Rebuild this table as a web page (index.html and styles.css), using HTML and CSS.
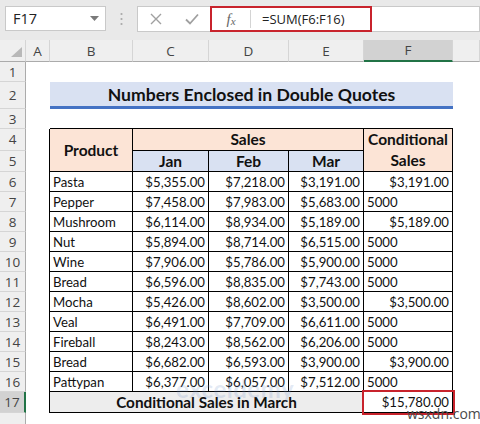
FILE: index.html
```html
<!DOCTYPE html>
<html>
<head>
<meta charset="utf-8">
<link rel="stylesheet" href="styles.css">
</head>
<body>
<div class="fbar">
  <div class="namebox"><span>F17</span><svg width="9" height="5" viewBox="0 0 9 5"><path d="M0 0H9L4.5 5Z" fill="#7a7a7a"/></svg></div>
  <div class="dots"><svg width="3" height="14" viewBox="0 0 3 14"><circle cx="1.5" cy="2" r="1.1" fill="#a8a8a8"/><circle cx="1.5" cy="7" r="1.1" fill="#a8a8a8"/><circle cx="1.5" cy="12" r="1.1" fill="#a8a8a8"/></svg></div>
  <div class="btns">
    <span class="btn"><svg width="12" height="12" viewBox="0 0 12 12"><path d="M1 1L11 11M11 1L1 11" stroke="#a0a0a0" stroke-width="1.4" fill="none"/></svg></span>
    <span class="btn"><svg width="14" height="12" viewBox="0 0 14 12"><path d="M1 6.5L5 10.5L13 1.5" stroke="#a0a0a0" stroke-width="1.8" fill="none"/></svg></span>
  </div>
  <div class="formula">
    <div class="hl">
      <span class="fx">f<sub>x</sub></span>
      <span class="sep"></span>
      <span class="ftext">=SUM(F6:F16)</span>
    </div>
  </div>
</div>
<table class="sheet">
  <colgroup>
    <col class="w-rn"><col class="w-a"><col class="w-b"><col class="w-c"><col class="w-d"><col class="w-e"><col class="w-f"><col class="w-g">
  </colgroup>
  <tr class="h-hdr">
    <th class="corner"><svg width="26" height="21" viewBox="0 0 26 21"><path d="M22 7V17H11Z" fill="#b8b8b8"/></svg></th>
    <th class="ch">A</th><th class="ch">B</th><th class="ch">C</th><th class="ch">D</th><th class="ch">E</th><th class="ch sel">F</th><th class="ch"></th>
  </tr>
  <tr class="h20"><th class="rn">1</th><td></td><td></td><td></td><td></td><td></td><td></td><td></td></tr>
  <tr class="h27"><th class="rn">2</th><td></td><td class="title" colspan="5">Numbers Enclosed in Double Quotes</td><td></td></tr>
  <tr class="h20"><th class="rn">3</th><td></td><td class="tb"></td><td class="tb"></td><td class="tb"></td><td class="tb"></td><td class="tb"></td><td></td></tr>
  <tr class="h21"><th class="rn">4</th><td class="lb"></td><td class="c hd peach" rowspan="2">Product</td><td class="c hd peach" colspan="3">Sales</td><td class="c hd peach two" rowspan="2">Conditional<br>Sales</td><td></td></tr>
  <tr class="h21"><th class="rn">5</th><td class="lb"></td><td class="c hd blue">Jan</td><td class="c hd blue">Feb</td><td class="c hd blue">Mar</td><td></td></tr>
  <tr class="h20"><th class="rn">6</th><td class="lb"></td><td class="c p">Pasta</td><td class="c n">$5,355.00</td><td class="c n">$7,218.00</td><td class="c n">$3,191.00</td><td class="c n">$3,191.00</td><td></td></tr>
  <tr class="h20"><th class="rn">7</th><td class="lb"></td><td class="c p">Pepper</td><td class="c n">$7,458.00</td><td class="c n">$7,983.00</td><td class="c n">$5,683.00</td><td class="c p">5000</td><td></td></tr>
  <tr class="h20"><th class="rn">8</th><td class="lb"></td><td class="c p">Mushroom</td><td class="c n">$6,114.00</td><td class="c n">$8,934.00</td><td class="c n">$5,189.00</td><td class="c n">$5,189.00</td><td></td></tr>
  <tr class="h20"><th class="rn">9</th><td class="lb"></td><td class="c p">Nut</td><td class="c n">$5,894.00</td><td class="c n">$8,714.00</td><td class="c n">$6,515.00</td><td class="c p">5000</td><td></td></tr>
  <tr class="h20"><th class="rn">10</th><td class="lb"></td><td class="c p">Wine</td><td class="c n">$7,906.00</td><td class="c n">$5,786.00</td><td class="c n">$5,900.00</td><td class="c p">5000</td><td></td></tr>
  <tr class="h20"><th class="rn">11</th><td class="lb"></td><td class="c p">Bread</td><td class="c n">$6,596.00</td><td class="c n">$8,835.00</td><td class="c n">$7,743.00</td><td class="c p">5000</td><td></td></tr>
  <tr class="h20"><th class="rn">12</th><td class="lb"></td><td class="c p">Mocha</td><td class="c n">$5,426.00</td><td class="c n">$8,602.00</td><td class="c n">$3,500.00</td><td class="c n">$3,500.00</td><td></td></tr>
  <tr class="h20"><th class="rn">13</th><td class="lb"></td><td class="c p">Veal</td><td class="c n">$6,491.00</td><td class="c n">$7,709.00</td><td class="c n">$6,611.00</td><td class="c p">5000</td><td></td></tr>
  <tr class="h20"><th class="rn">14</th><td class="lb"></td><td class="c p">Fireball</td><td class="c n">$8,243.00</td><td class="c n">$8,562.00</td><td class="c n">$6,206.00</td><td class="c p">5000</td><td></td></tr>
  <tr class="h20"><th class="rn">15</th><td class="lb"></td><td class="c p">Bread</td><td class="c n">$6,682.00</td><td class="c n">$6,593.00</td><td class="c n">$3,900.00</td><td class="c n">$3,900.00</td><td></td></tr>
  <tr class="h20"><th class="rn">16</th><td class="lb"></td><td class="c p">Pattypan</td><td class="c n">$6,377.00</td><td class="c n">$6,057.00</td><td class="c n">$7,512.00</td><td class="c p">5000</td><td></td></tr>
  <tr class="h21"><th class="rn rsel">17</th><td class="lb"></td><td class="c total" colspan="4">Conditional Sales in March</td><td class="c n sum">$15,780.00</td><td></td></tr>
  <tr class="h20"><th class="rn"></th><td></td><td></td><td></td><td></td><td></td><td></td><td></td></tr>
</table>
<div class="wm">exceldemy</div>
<div class="credit">wsxdn.com</div>
</body>
</html>
```
FILE: styles.css
```css
html, body {
  margin: 0;
  padding: 0;
}
body {
  width: 480px;
  height: 424px;
  overflow: hidden;
  background: #fff;
  font-family: Lato, "Liberation Sans", sans-serif;
  position: relative;
}
.fbar {
  display: flex;
  align-items: flex-start;
  height: 40px;
  box-sizing: border-box;
  padding-top: 6px;
  background: #e9e9e9;
}
.namebox {
  margin-left: 5px;
  width: 101px;
  height: 25px;
  box-sizing: border-box;
  background: #fff;
  border: 1px solid #c9c9c9;
  display: flex;
  align-items: center;
  justify-content: space-between;
  padding: 0 6px 0 7px;
  font: 14.5px "Open Sans", sans-serif;
  color: #222;
}
.dots {
  width: 31px;
  height: 25px;
  display: flex;
  align-items: center;
  justify-content: center;
}
.btns {
  width: 73px;
  height: 26px;
  box-sizing: border-box;
  background: #fff;
  border: 1px solid #c9c9c9;
  border-right: none;
  display: flex;
  align-items: center;
}
.btn {
  width: 36px;
  display: flex;
  justify-content: center;
}
.formula {
  flex: 1;
  height: 26px;
  box-sizing: border-box;
  background: #fff;
  border: 1px solid #c9c9c9;
  border-left: none;
}
.hl {
  width: 162px;
  height: 26px;
  margin-top: -1px;
  box-sizing: border-box;
  border: 2px solid #c8232c;
  display: flex;
  align-items: center;
}
.fx {
  width: 38px;
  text-align: center;
  font: italic 15px "Liberation Serif", serif;
  color: #666;
}
.fx sub {
  font-size: 11px;
  vertical-align: -1px;
}
.sep {
  width: 1px;
  height: 18px;
  background: #d4d4d4;
}
.ftext {
  padding-left: 11px;
  font: 13px "Open Sans", sans-serif;
  color: #222;
}
.sheet {
  border-collapse: separate;
  border-spacing: 0;
  table-layout: fixed;
  width: 480px;
}
.w-rn { width: 26px; }
.w-a { width: 24px; }
.w-b { width: 83px; }
.w-c { width: 76px; }
.w-d { width: 80px; }
.w-e { width: 75px; }
.w-f { width: 89px; }
.w-g { width: 27px; }
.sheet th, .sheet td {
  padding: 0;
  box-sizing: border-box;
  white-space: nowrap;
  overflow: hidden;
}
.h-hdr { height: 22px; }
.h20 { height: 20px; }
.h21 { height: 21px; }
.h27 { height: 27px; }
.corner {
  background: #efefef;
  border-right: 1px solid #d5d5d5;
  border-bottom: 1px solid #ababab;
  vertical-align: top;
  line-height: 0;
}
.ch {
  background: #efefef;
  border-right: 1px solid #d5d5d5;
  border-bottom: 1px solid #ababab;
  font: 13.5px "Open Sans", sans-serif;
  color: #444;
  font-weight: normal;
  text-align: center;
}
.ch.sel {
  background: #d2d2d2;
  border-bottom: 2px solid #217346;
}
.rn {
  background: #efefef;
  border-right: 1px solid #ababab;
  border-bottom: 1px solid #d5d5d5;
  font: 13.5px "Open Sans", sans-serif;
  color: #444;
  font-weight: normal;
  text-align: center;
}
.rn.rsel {
  background: #d2d2d2;
  border-right: 2px solid #217346;
}
.title {
  background: #d9e1f2;
  border-bottom: 3px solid #4472c4;
  font-weight: bold;
  font-size: 17.6px;
  color: #111;
  text-align: center;
  vertical-align: middle;
}
.tb { border-bottom: 1px solid #000; }
.lb { border-right: 1px solid #000; }
.c {
  border-right: 1px solid #000;
  border-bottom: 1px solid #000;
  font-size: 13.2px;
  color: #111;
}
.hd {
  font-weight: bold;
  font-size: 15.5px;
  text-align: center;
  vertical-align: middle;
}
.two { line-height: 21px; }
.peach { background: #fce4d6; }
.blue { background: #d9e1f2; }
.p {
  text-align: left;
  padding-left: 3px !important;
}
.n {
  text-align: right;
  padding-right: 3px !important;
}
.total {
  background: #ededed;
  font-weight: bold;
  font-size: 15.3px;
  text-align: center;
}
.sum {
  outline: 2px solid #c8232c;
}
.wm {
  position: absolute;
  left: 176px;
  top: 374px;
  font: bold 24px Lato, sans-serif;
  color: rgba(110, 145, 200, 0.2);
  letter-spacing: 0.5px;
}
.credit {
  position: absolute;
  left: 407px;
  top: 404px;
  font: 14px "Open Sans", sans-serif;
  color: #4a4a4a;
}
```
